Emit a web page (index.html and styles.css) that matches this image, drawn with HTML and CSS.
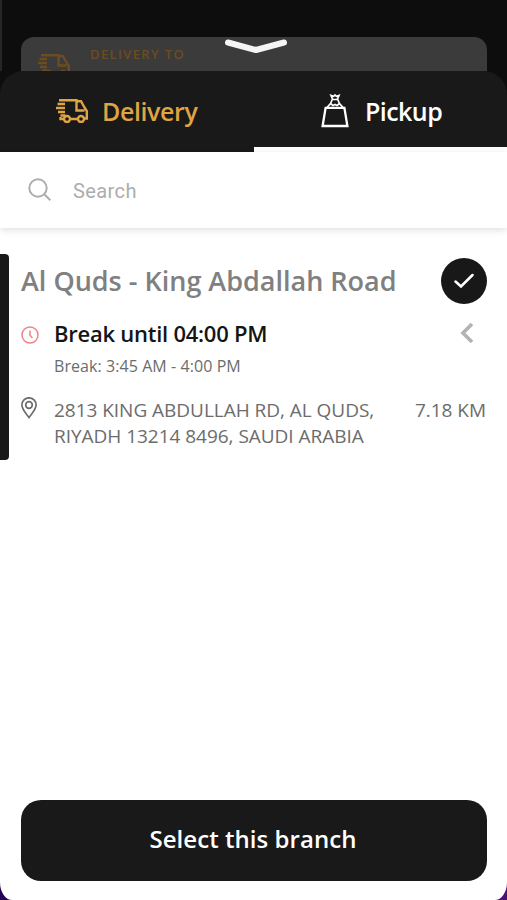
FILE: index.html
```html
<!DOCTYPE html>
<html lang="en">
<head>
    <meta charset="UTF-8">
    <meta name="viewport" content="width=device-width, initial-scale=1.0">
    <title>Select branch</title>
    <link rel="stylesheet" href="styles.css">
</head>
<body>
    <svg class="symbols" aria-hidden="true">
        <symbol id="truck" viewBox="0 0 32 24">
            <path d="M3 1.3H20.5V11.5H28.5M20.5 2.2H25L28.5 8.5L30.8 12V19.5H28.6M22.2 20H14.8M7.2 20H4.5V18M1.5 5H9M0 9H9M2 13H9M4.5 16.5H9.5"/>
            <circle cx="11" cy="20" r="3"/>
            <circle cx="25" cy="20" r="3"/>
        </symbol>
    </svg>

    <div class="screen">
        <div class="backdrop">
            <div class="delivery-card">
                <svg class="truck"><use href="#truck"/></svg>
                <span>DELIVERY TO</span>
            </div>
            <svg class="handle" viewBox="0 0 62 16"><path d="M3 3.5L31 11L59 3.5"/></svg>
        </div>

        <div class="sheet">
            <div class="tabs">
                <div class="tab active">
                    <svg class="truck"><use href="#truck"/></svg>
                    <span>Delivery</span>
                </div>
                <div class="tab">
                    <svg class="bag" viewBox="0 0 28 34">
                        <path d="M4.6 13.8H23.4L26.4 32H1.6Z"/>
                        <path class="thin" d="M6 13.5L9.5 9.5L11.5 5L10 1.5L12.5 2.3L14 1L15.5 2.3L18 1.5L16.5 5L18.5 9.5L22 13.5M11.5 5.5H16.5M9.5 9.5L12 11.5L14 10.5L16 11.5L18.5 9.5"/>
                    </svg>
                    <span>Pickup</span>
                </div>
            </div>

            <div class="search">
                <svg viewBox="0 0 24 24"><circle cx="10" cy="10" r="8.7"/><path d="M16.3 16.3L22.3 22.3"/></svg>
                <span>Search</span>
            </div>

            <div class="branch">
                <div class="marker"></div>
                <div class="branch-body">
                    <div class="branch-header">
                        <h2>Al Quds - King Abdallah Road</h2>
                        <div class="check">
                            <svg viewBox="0 0 20 16"><path d="M1.5 8.5L7 13.5L18.5 2"/></svg>
                        </div>
                    </div>
                    <div class="status">
                        <svg class="clock" viewBox="0 0 18 18"><circle cx="9" cy="9" r="8"/><path d="M9 4.5V9.3L11.5 12"/></svg>
                        <strong>Break until 04:00 PM</strong>
                        <svg class="arrow" viewBox="0 0 14 22"><path d="M12 2L3 11L12 20"/></svg>
                    </div>
                    <div class="hours">Break: 3:45 AM - 4:00 PM</div>
                    <div class="address">
                        <svg class="pin" viewBox="0 0 16 22"><path d="M8 20.5C5.5 17 .9 12.2 .9 7.9A7.1 7.1 0 0 1 15.1 7.9C15.1 12.2 10.5 17 8 20.5Z"/><circle cx="8" cy="8" r="3.3"/></svg>
                        <p>2813 KING ABDULLAH RD, AL QUDS,<br>RIYADH 13214 8496, SAUDI ARABIA</p>
                        <span class="distance">7.18 KM</span>
                    </div>
                </div>
            </div>

            <button class="select-btn">Select this branch</button>
        </div>
    </div>
</body>
</html>
```

FILE: styles.css
```css
* {
    box-sizing: border-box;
}

body {
    margin: 0;
    font-family: "Open Sans", "Noto Sans", sans-serif;
    background: linear-gradient(90deg, #230052, #4a1172);
}

svg {
    display: block;
    flex: none;
    fill: none;
    stroke: currentColor;
    stroke-width: 2;
}

.symbols {
    position: absolute;
    width: 0;
    height: 0;
}

.screen {
    height: 900px;
    display: flex;
    flex-direction: column;
    overflow: hidden;
    background: linear-gradient(#0d0d0d 0 200px, transparent 200px);
}

.backdrop {
    position: relative;
    height: 71px;
    padding: 37px 20px 0 19px;
    border-left: 2px solid #262626;
}

.delivery-card {
    height: 34px;
    padding: 17px 0 0 17px;
    display: flex;
    gap: 20px;
    overflow: hidden;
    border-radius: 13px 13px 0 0;
    background: #3b3b3b;
    color: #6c4c20;
}

.delivery-card span {
    margin-top: -9px;
    font-size: 13px;
    font-weight: 600;
    line-height: 18px;
    letter-spacing: 1.35px;
}

.truck {
    width: 32px;
    height: 24px;
    stroke-width: 2.4;
}

/* drag handle lies over the card behind the sheet */
.handle {
    position: absolute;
    left: 223px;
    top: 39px;
    width: 62px;
    height: 16px;
    color: #f5f5f5;
    stroke-width: 6;
    stroke-linecap: round;
    stroke-linejoin: round;
}

.sheet {
    flex: 1;
    display: flex;
    flex-direction: column;
    overflow: hidden;
    border-radius: 24px 24px 12px 12px / 24px 24px 18px 18px;
    background: linear-gradient(#1a1919 0 40px, #fff 40px);
}

.tabs {
    height: 81px;
    display: grid;
    grid-template-columns: 254px 1fr;
    background: #1a1919;
}

.tab {
    display: flex;
    align-items: center;
    gap: 16px;
    padding-left: 67px;
    border-bottom: 5px solid #fff;
    color: #fff;
    font-size: 25px;
    font-weight: 600;
    letter-spacing: -0.55px;
}

.tab.active {
    padding: 0 0 2px 56px;
    border: 0;
    gap: 14px;
    letter-spacing: -0.4px;
    color: #dfa444;
}

.bag {
    width: 28px;
    height: 34px;
    margin-top: 3px;
    stroke-width: 2.3;
}

.bag .thin {
    stroke-width: 1.7;
}

.tab span {
    margin-top: 3px;
    line-height: 34px;
}

.tab.active span {
    margin-top: 1px;
}

.search {
    height: 76px;
    padding: 0 28px;
    display: flex;
    align-items: center;
    gap: 21px;
    color: #adadad;
    font-family: Roboto, sans-serif;
    font-size: 20px;
    letter-spacing: 0.4px;
    box-shadow: 0 2px 7px rgba(0, 0, 0, 0.13);
}

.search svg {
    width: 24px;
    height: 24px;
}

.search span {
    margin-top: 2px;
}

.branch {
    height: 206px;
    margin-top: 26px;
    display: flex;
    color: #6c6c6c;
}

.marker {
    width: 9px;
    border-radius: 0 4px 4px 0;
    background: #181818;
}

.branch-body {
    flex: 1;
    padding: 4px 20px 0 12px;
}

.branch-header {
    height: 46px;
    display: flex;
    justify-content: space-between;
    align-items: center;
}

h2 {
    margin: 0;
    font-size: 27px;
    font-weight: 600;
    line-height: 38px;
    color: #808080;
    white-space: nowrap;
}

.check {
    width: 46px;
    height: 46px;
    display: flex;
    align-items: center;
    justify-content: center;
    border-radius: 50%;
    background: #181818;
    color: #fff;
}

.check svg {
    width: 20px;
    height: 16px;
    stroke-width: 2.5;
    stroke-linecap: round;
}

.status {
    height: 32px;
    margin-top: 13px;
    display: flex;
    align-items: center;
}

.status strong {
    margin-left: 15px;
    font-size: 22px;
    font-weight: 600;
    letter-spacing: -0.25px;
    color: #151515;
}

.clock {
    width: 18px;
    height: 18px;
    margin-top: 4px;
    color: #ee8585;
    stroke-width: 1.5;
}

.arrow {
    width: 14px;
    height: 22px;
    margin: 0 13px 0 auto;
    color: #b3b3b3;
    stroke-width: 3.7;
}

.hours {
    margin: 5px 0 0 33px;
    font-size: 16px;
    line-height: 24px;
    letter-spacing: 0.07px;
}

.address {
    margin-top: 19px;
    display: flex;
    align-items: flex-start;
    font-size: 19px;
    line-height: 26px;
    letter-spacing: -0.03px;
    white-space: nowrap;
}

.address p {
    margin: 0 0 0 17px;
}

.pin {
    width: 16px;
    height: 22px;
    stroke-width: 1.7;
}

.distance {
    margin: 0 1px 0 auto;
}

.select-btn {
    height: 81px;
    margin: auto 20px 19px 21px;
    padding: 0 2px 5px 0;
    border: 0;
    border-radius: 20px;
    background: #1a1919;
    color: #fff;
    font: 600 24px "Open Sans", "Noto Sans", sans-serif;
    letter-spacing: 0.05px;
}
```
